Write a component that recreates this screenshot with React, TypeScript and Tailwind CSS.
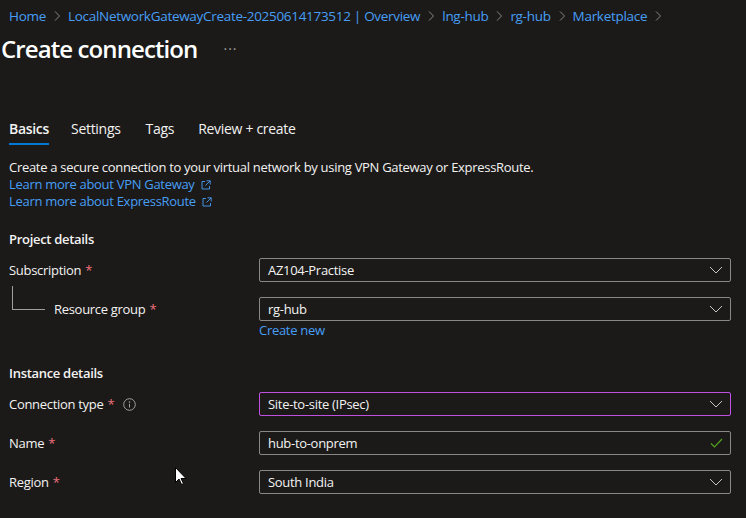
import React from 'react';

const font = { fontFamily: '"Open Sans", "Noto Sans", sans-serif' };

function Chevron() {
  return (
    <svg width="14" height="8" viewBox="0 0 14 8" className="mr-[7px] shrink-0" aria-hidden>
      <path d="M1 1 L7 7 L13 1" fill="none" stroke="#c8c6c4" strokeWidth="1" />
    </svg>
  );
}

function Check() {
  return (
    <svg width="13" height="10" viewBox="0 0 13 10" className="mr-[7px] shrink-0" aria-hidden>
      <path d="M1 5.5 L4.5 9 L12 1" fill="none" stroke="#54a31c" strokeWidth="1.2" />
    </svg>
  );
}

function ExtLink() {
  return (
    <svg width="10" height="10" viewBox="0 0 10 10" className="ml-[6px] inline-block" aria-hidden>
      <path d="M4 1.5 H1 V9 H8.5 V6" fill="none" stroke="#479ef5" strokeWidth="0.9" />
      <path d="M5.5 0.8 H9.2 V4.5 M9.2 0.8 L4.5 5.5" fill="none" stroke="#479ef5" strokeWidth="0.9" />
    </svg>
  );
}

function Crumb({ label }: { label: string }) {
  return (
    <span className="flex shrink-0 items-center">
      <span className="text-[#479ef5]">{label}</span>
      <svg width="8" height="12" viewBox="0 0 8 12" className="mx-[7px]" aria-hidden>
        <path d="M2 1.5 L6.5 6 L2 10.5" fill="none" stroke="#8a8886" strokeWidth="1" />
      </svg>
    </span>
  );
}

function Field({
  value,
  focus,
  valid,
}: {
  value: string;
  focus?: boolean;
  valid?: boolean;
}) {
  return (
    <div
      className={`flex h-[24px] w-[472px] items-center justify-between rounded-[2px] border pl-[8px] ${
        focus ? 'border-[#c150e0]' : 'border-[#8a8886]'
      }`}
    >
      <span className="text-[13px] leading-[18px] text-[#f3f2f1]">{value}</span>
      {valid ? <Check /> : <Chevron />}
    </div>
  );
}

function Label({ text, info }: { text: string; info?: boolean }) {
  return (
    <span className="flex items-center text-[13px] leading-[18px] text-[#f3f2f1]">
      {text}
      <span className="ml-[4px] text-[#f1707b]">*</span>
      {info ? (
        <svg width="13" height="13" viewBox="0 0 13 13" className="ml-[9px]" aria-hidden>
          <circle cx="6.5" cy="6.5" r="5.8" fill="none" stroke="#a19f9d" strokeWidth="1" />
          <circle cx="6.5" cy="4" r="0.8" fill="#a19f9d" />
          <path d="M6.5 5.8 V9.5" stroke="#a19f9d" strokeWidth="1" />
        </svg>
      ) : null}
    </span>
  );
}

export default function App() {
  return (
    <div
      className="relative h-[518px] w-[746px] overflow-hidden bg-[#1b1a19] tracking-[-0.3px]"
      style={font}
    >
      {/* breadcrumb */}
      <div className="flex items-center whitespace-nowrap pl-[9px] pt-[6px] text-[13.5px] leading-[20px]">
        {['Home', 'LocalNetworkGatewayCreate-20250614173512 | Overview', 'lng-hub', 'rg-hub', 'Marketplace'].map(
          (c) => (
            <Crumb key={c} label={c} />
          ),
        )}
      </div>

      {/* title */}
      <div className="mt-[7px] flex items-center pl-[1px]">
        <h1 className="text-[24px] font-semibold leading-[32px] tracking-[-0.9px] text-white">
          Create connection
        </h1>
        <span className="ml-[26px] text-[14px] leading-[20px] tracking-[1px] text-[#a19f9d]">···</span>
      </div>

      {/* tabs */}
      <div className="mt-[54px] flex pl-[9px] text-[14px] leading-[20px] text-[#f3f2f1]">
        <div className="mr-[22px] flex flex-col">
          <span className="font-semibold">Basics</span>
          <span className="mt-[4px] h-[2px] bg-[#0078d4]" />
        </div>
        <span className="mr-[25px]">Settings</span>
        <span className="mr-[24px]">Tags</span>
        <span>Review + create</span>
      </div>

      {/* intro */}
      <div className="mt-[14px] pl-[9px] text-[13px] leading-[17px]">
        <p className="text-[#f3f2f1]">
          Create a secure connection to your virtual network by using VPN Gateway or ExpressRoute.
        </p>
        <p className="flex items-center text-[#479ef5]">
          Learn more about VPN Gateway
          <ExtLink />
        </p>
        <p className="flex items-center text-[#479ef5]">
          Learn more about ExpressRoute
          <ExtLink />
        </p>
      </div>

      {/* project details */}
      <div className="mt-[20px] pl-[9px]">
        <h2 className="text-[13px] font-semibold leading-[18px] text-[#f3f2f1]">Project details</h2>
        <div className="mt-[10px] flex items-center">
          <div className="w-[250px]">
            <Label text="Subscription" />
          </div>
          <Field value="AZ104-Practise" />
        </div>
        <div className="mt-[15px] flex items-center">
          <div className="flex w-[250px] items-end">
            <span className="-mt-[14px] mb-[-10px] ml-[3px] h-[24px] w-[33px] self-start border-b border-l border-[#a19f9d]" />
            <span className="ml-[9px]">
              <Label text="Resource group" />
            </span>
          </div>
          <Field value="rg-hub" />
        </div>
        <div className="pl-[250px] text-[13px] leading-[18px] text-[#479ef5]">Create new</div>
      </div>

      {/* instance details */}
      <div className="mt-[25px] pl-[9px]">
        <h2 className="text-[13px] font-semibold leading-[18px] text-[#f3f2f1]">Instance details</h2>
        <div className="mt-[10px] flex items-center">
          <div className="w-[250px]">
            <Label text="Connection type" info />
          </div>
          <Field value="Site-to-site (IPsec)" focus />
        </div>
        <div className="mt-[15px] flex items-center">
          <div className="w-[250px]">
            <Label text="Name" />
          </div>
          <Field value="hub-to-onprem" valid />
        </div>
        <div className="mt-[15px] flex items-center">
          <div className="w-[250px]">
            <Label text="Region" />
          </div>
          <Field value="South India" />
        </div>
      </div>

      {/* mouse pointer */}
      <svg width="12" height="19" viewBox="0 0 12 19" className="absolute left-[175px] top-[467px]" aria-hidden>
        <path d="M0.5 0.5 V15.5 L4 12 L6.5 17.5 L8.5 16.5 L6 11.5 H11 Z" fill="#ffffff" stroke="#000000" strokeWidth="1" />
      </svg>
    </div>
  );
}
